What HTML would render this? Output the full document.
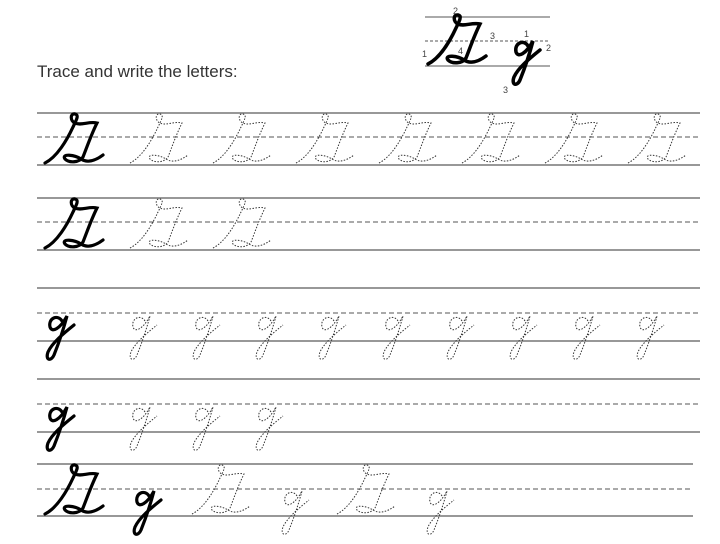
<!DOCTYPE html>
<html><head><meta charset="utf-8"><style>
html,body{margin:0;padding:0;background:#fff;width:720px;height:544px;overflow:hidden}
.t{position:absolute;left:37px;top:62px;font:17px "Liberation Sans",sans-serif;color:#333}
</style></head><body>
<div class="t">Trace and write the letters:</div>
<svg width="720" height="544" style="position:absolute;left:0;top:0">
<defs>
<path id="G" d="M0,-2 C12,-8 22,-25 28,-38 C32,-46 34,-50 30,-51 C25,-52 25,-44 30,-42 C36,-39 44,-44 52,-42 C46,-30 42,-18 38,-8 C34,-2 24,-2 20,-6 C16,-12 30,-10 36,-6 C42,-2 50,-4 58,-10" fill="none"/>
<path id="g" d="M12,-20 C8,-27 -2,-23 0,-14 C2,-8 10,-12 17,-25 C13,-10 8,4 4,14 C1,21 -5,19 -2,11 C2,2 14,-8 24,-16" fill="none"/>
</defs>
<g stroke="#777" stroke-width="1.5">
<line x1="37" y1="113" x2="700" y2="113"/><line x1="37" y1="165" x2="700" y2="165"/>
<line x1="37" y1="198" x2="700" y2="198"/><line x1="37" y1="250" x2="700" y2="250"/>
<line x1="37" y1="288" x2="700" y2="288"/>
<line x1="37" y1="341" x2="700" y2="341"/><line x1="37" y1="379" x2="700" y2="379"/>
<line x1="37" y1="432" x2="700" y2="432"/>
<line x1="37" y1="464" x2="693" y2="464"/><line x1="37" y1="516" x2="693" y2="516"/>
</g>
<g stroke="#555" stroke-width="1" stroke-dasharray="5,3">
<line x1="37" y1="137" x2="700" y2="137"/><line x1="37" y1="222" x2="700" y2="222"/>
<line x1="37" y1="313" x2="700" y2="313"/><line x1="37" y1="404" x2="700" y2="404"/>
<line x1="37" y1="489" x2="693" y2="489"/>
</g>
<g stroke="#000" stroke-width="3.2" stroke-linecap="round">
<use href="#G" x="45" y="165"/><use href="#G" x="45" y="250"/>
<use href="#g" x="50" y="341"/><use href="#g" x="50" y="432"/>
<use href="#G" x="45" y="516"/><use href="#g" x="137" y="516"/>
</g>
<g stroke="#333" stroke-width="1" stroke-dasharray="1.5,1.5">
<use href="#G" x="130" y="165"/><use href="#G" x="213" y="165"/><use href="#G" x="296" y="165"/><use href="#G" x="379" y="165"/><use href="#G" x="462" y="165"/><use href="#G" x="545" y="165"/><use href="#G" x="628" y="165"/>
<use href="#G" x="130" y="250"/><use href="#G" x="213" y="250"/>
<use href="#g" x="133" y="341"/><use href="#g" x="196" y="341"/><use href="#g" x="259" y="341"/><use href="#g" x="322" y="341"/><use href="#g" x="386" y="341"/><use href="#g" x="450" y="341"/><use href="#g" x="513" y="341"/><use href="#g" x="576" y="341"/><use href="#g" x="640" y="341"/>
<use href="#g" x="133" y="432"/><use href="#g" x="196" y="432"/><use href="#g" x="259" y="432"/>
<use href="#G" x="192" y="516"/><use href="#g" x="285" y="516"/><use href="#G" x="337" y="516"/><use href="#g" x="430" y="516"/>
</g>
<!-- top example -->
<g stroke="#777" stroke-width="1.2">
<line x1="425" y1="17" x2="550" y2="17"/><line x1="425" y1="66" x2="550" y2="66"/>
</g>
<line x1="425" y1="41" x2="550" y2="41" stroke="#555" stroke-dasharray="3,2"/>
<g stroke="#000" stroke-width="3.5" stroke-linecap="round">
<use href="#G" x="428" y="66"/><use href="#g" x="516" y="66"/>
</g>
<g font-family="Liberation Sans,sans-serif" font-size="9" fill="#444">
<text x="453" y="14">2</text><text x="490" y="39">3</text><text x="422" y="57">1</text><text x="458" y="54">4</text>
<text x="524" y="37">1</text><text x="546" y="51">2</text><text x="503" y="93">3</text>
</g>
</svg>
</body></html>
